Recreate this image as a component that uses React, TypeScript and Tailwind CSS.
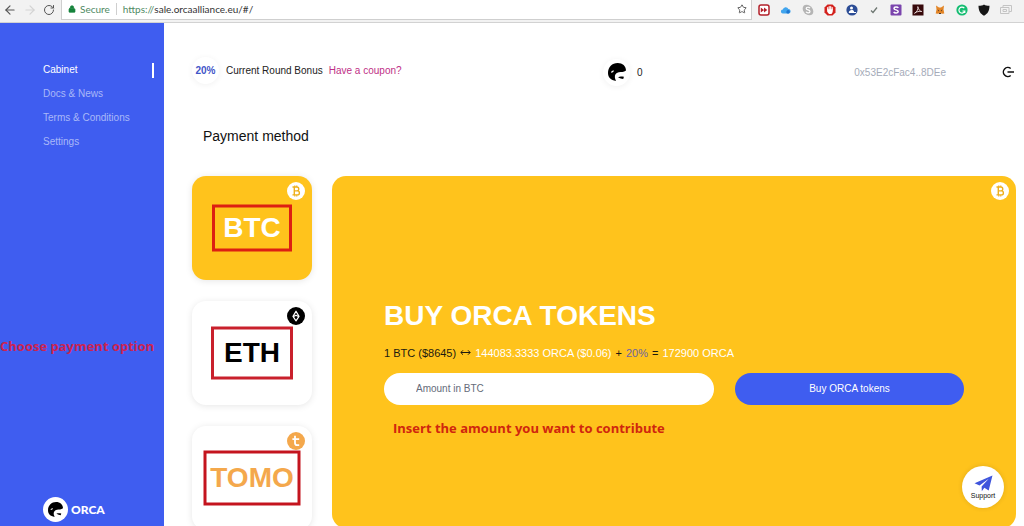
import type { ReactNode } from "react";
import { ArrowLeft, ArrowRight, RotateCw, Lock, Star } from "lucide-react";

const navItems = ["Cabinet", "Docs & News", "Terms & Conditions", "Settings"];

type Method = { name: string; card: string; badge: string; mark: string; icon: ReactNode };

const methods: Method[] = [
  { name: "BTC", card: "bg-[#ffc31c] text-white", badge: "bg-white text-[#eeb01c]", mark: "h-[47px] w-[80px] border-[#dd1f12]", icon: <BitcoinIcon /> },
  { name: "ETH", card: "bg-white text-black", badge: "bg-black text-white", mark: "h-[53px] w-[82px] border-[#c9202c]", icon: <EthIcon /> },
  { name: "TOMO", card: "bg-white text-[#f4a84c]", badge: "bg-[#f4a84c] text-white", mark: "h-[55px] w-[97px] border-[#c4141e]", icon: <TomoIcon /> },
];

function BitcoinIcon() {
  return (
    <svg viewBox="0 0 18 18" className="size-[18px]" fill="none" stroke="currentColor" strokeWidth="1.4">
      <path d="M5.5 5h4.3a1.9 1.9 0 0 1 0 3.9H7.2M7.2 8.9h3.2a2 2 0 0 1 0 4H5.5M7.3 5v7.9" />
      <path d="M7.8 3.4V5M9.8 3.4V5M7.8 13v1.6M9.8 13v1.6" strokeWidth="1" />
    </svg>
  );
}

function EthIcon() {
  return (
    <svg viewBox="0 0 18 18" className="size-[18px]" fill="none" stroke="currentColor" strokeWidth="1.2" strokeLinejoin="round">
      <path d="M9 4.2 12 9.4 9 13.8 6 9.4Z" />
      <path d="M6.2 9.6 9 8.2l2.8 1.4" />
    </svg>
  );
}

function TomoIcon() {
  return (
    <svg viewBox="0 0 18 18" className="size-[18px]" fill="none" stroke="currentColor" strokeWidth="1.8">
      <path d="M8 3.8v7.1a2.2 2.2 0 0 0 2.2 2.2h2M5.4 7.2h6.8" />
    </svg>
  );
}

function OrcaIcon({ className }: { className: string }) {
  return (
    <svg viewBox="0 0 52 52" className={className} aria-hidden="true">
      <path d="M0 29C0 12 12 0 28 0c14 0 24 9 24 22-7 5-13 4-21 5-9 2-12 8-11 16l3 9C8 50 0 41 0 29Z" fill="#000" />
      <path d="M9 28c0-4 4-7 8-6 0 3-3 6-8 6Z" fill="#fff" />
      <path d="M29 41c6-3 11-2 17-1l-2 6c-5 0-9-2-15-5Z" fill="#000" />
    </svg>
  );
}

function Extensions() {
  const icon = "size-3 shrink-0";
  return (
    <div className="flex items-center gap-[10px]">
      <svg viewBox="0 0 12 12" className={icon}>
        <rect x="1" y="1" width="10" height="10" rx="2" fill="#fff" stroke="#b3202a" strokeWidth="1.5" />
        <path d="M2.8 3.4 6 6 2.8 8.6ZM6 3.4 9.3 6 6 8.6Z" fill="#b3202a" />
      </svg>
      <svg viewBox="0 0 12 12" className={icon}>
        <path d="M3 9.5a2 2 0 0 1-.2-4A3 3 0 0 1 8.4 5a2.3 2.3 0 0 1 .6 4.5Z" fill="#41a5ee" />
        <path d="M7 9.5a2 2 0 0 1 1.500-3.500 2 2 0 0 1 .5 3.500Z" fill="#2077d1" />
      </svg>
      <svg viewBox="0 0 12 12" className={icon}>
        <circle cx="4.5" cy="4.5" r="3.8" fill="#b5b5b5" />
        <circle cx="7.5" cy="7.5" r="3.8" fill="#b5b5b5" />
        <circle cx="6" cy="6" r="4.6" fill="#b5b5b5" />
        <path d="M8 4.2C7 2.8 4.2 3 4.2 4.6 4.2 6.4 8 5.4 8 7.4 8 9.2 4.8 9.2 4 7.7" fill="none" stroke="#fff" strokeWidth="1.2" />
      </svg>
      <svg viewBox="0 0 12 12" className={icon}>
        <path d="M3.5.5h5l3 3v5l-3 3h-5l-3-3v-5Z" fill="#d3211d" />
        <path d="M3.7 6V3.5M5.2 5.5v-3M6.7 5.5v-3M8.2 6V3.5" stroke="#fff" strokeWidth="1.1" strokeLinecap="round" />
        <path d="M3.2 5.3h5.5V8L7.5 10H5L3.2 7.8Z" fill="#fff" />
      </svg>
      <svg viewBox="0 0 12 12" className={icon}>
        <circle cx="6" cy="6" r="5.6" fill="#2c4d96" />
        <circle cx="5.5" cy="4" r="1.5" fill="#fff" />
        <path d="M2.8 8.8c0-3.5 5.3-3.5 5.3-.8L10 8v1H2.8Z" fill="#fff" />
      </svg>
      <svg viewBox="0 0 12 12" className={icon}>
        <path d="m3 6.5 2 2 4-5" fill="none" stroke="#6d7671" strokeWidth="1.3" />
      </svg>
      <svg viewBox="0 0 12 12" className={icon}>
        <rect x=".5" y=".5" width="11" height="11" rx="1" fill="#7b45ad" />
        <path d="M8.3 4C7.5 2.6 4 2.7 4 4.4 4 6.3 8.2 5.5 8.2 7.5 8.2 9.4 4.6 9.5 3.7 7.8" fill="none" stroke="#fff" strokeWidth="1.5" />
      </svg>
      <svg viewBox="0 0 12 12" className={icon}>
        <rect x=".5" y=".5" width="11" height="11" fill="#37090b" />
        <path d="M2.5 9.3C5 8 6.4 5 5.8 2.6c1 3.5 2 4.6 4 4.9C7.3 7 4.5 7.6 2.5 9.3Z" fill="none" stroke="#e9d8d8" strokeWidth=".9" />
      </svg>
      <svg viewBox="0 0 12 12" className={icon}>
        <path d="m2 1.5 3 2h2l3-2-.5 4 .8 4-2.3.2L6 9l-2 .7-2.3-.2.8-4Z" fill="#e38526" />
        <path d="m3.5 5.5 1.6.8-.2 1.2ZM8.5 5.500l-1.600.8.2 1.200ZM5 9h2v1H5Z" fill="#4b3524" />
      </svg>
      <svg viewBox="0 0 12 12" className={icon}>
        <circle cx="6" cy="6" r="5.6" fill="#15bd72" />
        <path d="M8.3 4.2A3 3 0 1 0 8.8 7H6.5M8.8 6.5V9" fill="none" stroke="#fff" strokeWidth="1.2" />
      </svg>
      <svg viewBox="0 0 12 12" className={icon}>
        <path d="M.5 1.8C3 1.8 4.6 1.4 6 .4c1.4 1 3 1.4 5.5 1.4C11.5 7 9.5 10 6 11.7 2.5 10 .5 7 .5 1.8Z" fill="#161616" />
      </svg>
      <svg viewBox="0 0 12 12" className={icon} fill="none" stroke="#c4c4c4">
        <path d="M3 3.5v-2h8.5v6H9M.5 3.5H9v6H.5ZM3 5.5h3.5v2H3Z" />
      </svg>
    </div>
  );
}

function BrowserBar() {
  return (
    <div className="flex h-[23px] shrink-0 items-center border-b border-[#d2d2d2] bg-[#f2f2f2] pr-3 pb-[3px] font-['Lato',sans-serif] text-[10px] text-[#555]">
      <div className="flex w-[61px] shrink-0 items-center gap-[6px] pl-[3px]">
        <button aria-label="Back"><ArrowLeft className="size-[14px]" /></button>
        <button aria-label="Forward" className="text-[#d3d3d3]"><ArrowRight className="size-[14px]" /></button>
        <button aria-label="Reload"><RotateCw className="size-3" /></button>
      </div>
      <div className="mr-[6px] flex h-5 flex-1 items-center border border-t-0 border-[#cfcfcf] bg-white pr-1 pl-[6px]">
        <Lock className="mr-1 size-2 fill-[#16833c] text-[#16833c]" />
        <span className="text-[#4f8a63]">Secure</span>
        <span className="mx-[6px] h-3 w-px bg-[#cfcfcf]" />
        <label htmlFor="url" className="text-[#4f8a63]">https://</label>
        <input id="url" defaultValue="sale.orcaalliance.eu/#/" className="min-w-0 flex-1 text-[#333] outline-none" />
        <button aria-label="Bookmark"><Star className="size-[10px] text-[#444]" /></button>
      </div>
      <Extensions />
    </div>
  );
}

function Sidebar() {
  return (
    <aside className="relative flex w-[164px] shrink-0 flex-col justify-between bg-[#3f5df0] pt-[35px] pb-1">
      <nav className="text-[10px] leading-6">
        {navItems.map((item, i) => (
          <a
            key={item}
            href="#/"
            className={i === 0 ? "flex items-center justify-between pr-[10px] pl-[43px] text-white" : "flex pl-[43px] text-[#a9b8f8]"}
          >
            {item}
            {i === 0 && <span className="h-[15px] w-[2px] bg-white" />}
          </a>
        ))}
      </nav>
      <p className="absolute top-[313px] left-0 font-['Open_Sans',sans-serif] text-[13px] leading-5 font-bold whitespace-nowrap text-[#cc2350]">
        Choose payment option
      </p>
      <div className="flex items-center gap-[3px] pl-[43px]">
        <span className="flex size-[25px] items-center justify-center rounded-full bg-white">
          <OrcaIcon className="size-[15px]" />
        </span>
        <span className="font-['Lato',sans-serif] text-[12px] font-black text-white">ORCA</span>
      </div>
    </aside>
  );
}

function TopBar() {
  return (
    <header className="flex h-[26px] items-center text-[10px] text-[#222]">
      <div className="flex flex-1 items-center">
        <span className="mr-[7px] flex size-[27px] items-center justify-center rounded-full font-bold text-[#3f55c8] shadow-[0_1px_6px_rgba(0,0,0,0.06)]">20%</span>
        <span>Current Round Bonus</span>
        <a href="#/coupon" className="ml-[6px] text-[#c02f86]">Have a coupon?</a>
      </div>
      <div className="flex flex-1 items-center justify-between pt-1 pr-[2px]">
        <div className="flex items-center gap-[7px]">
          <span className="flex size-[27px] items-center justify-center rounded-full shadow-[0_1px_6px_rgba(0,0,0,0.06)]">
            <OrcaIcon className="size-[18px]" />
          </span>
          <span>0</span>
        </div>
        <div className="flex items-center gap-14">
          <span className="text-[#a5abb9]">0x53E2cFac4..8DEe</span>
          <button aria-label="Log out">
            <svg viewBox="0 0 12 12" className="size-3" fill="none" stroke="#111" strokeWidth="1.5">
              <path d="M8.7 2.5A4.5 4.5 0 1 0 8.7 9.5M5.5 6H12" />
            </svg>
          </button>
        </div>
      </div>
    </header>
  );
}

function MethodCard({ method }: { method: Method }) {
  return (
    <button className={`relative flex h-[104px] items-center justify-center rounded-[14px] text-[28px] font-bold shadow-[0_1px_7px_rgba(0,0,0,0.1)] ${method.card}`}>
      {method.name}
      <span className={`absolute top-[6px] right-[7px] rounded-full ${method.badge}`}>{method.icon}</span>
      <span className={`absolute top-1/2 left-1/2 -translate-x-1/2 -translate-y-1/2 border-3 ${method.mark}`} />
    </button>
  );
}

function BuyPanel() {
  return (
    <section className="relative mb-[2px] flex flex-col justify-center rounded-[14px] bg-[#ffc31c] px-[52px]">
      <span className="absolute top-[6px] right-[7px] rounded-full bg-white text-[#eeb01c]"><BitcoinIcon /></span>
      <h2 className="text-[28px] leading-8 font-bold text-white">BUY ORCA TOKENS</h2>
      <p className="mt-[13px] flex items-center gap-1 text-[11px] leading-4 text-[#1d1a10]">
        <span>1 BTC ($8645)</span>
        <svg viewBox="0 0 11 7" className="h-[7px] w-[11px]" fill="none" stroke="currentColor">
          <path d="M1 3.5h9M3 1.3.8 3.500 3 5.700M8 1.300l2.200 2.200L8 5.700" />
        </svg>
        <span className="text-white">144083.3333 ORCA ($0.06)</span>
        <span>+</span>
        <span className="text-[#6d63a0]">20%</span>
        <span>=</span>
        <span className="text-white">172900 ORCA</span>
      </p>
      <form className="mt-3 grid grid-cols-[330fr_229fr] gap-[21px] text-[10px]" onSubmit={(e) => e.preventDefault()}>
        <input aria-label="Amount in BTC" placeholder="Amount in BTC" className="h-8 min-w-0 rounded-full bg-white px-8 outline-none placeholder:text-[#666b7a]" />
        <button className="h-8 rounded-full bg-[#3f5df0] text-white">Buy ORCA tokens</button>
      </form>
      <p className="absolute top-[242px] left-[61px] font-['Open_Sans',sans-serif] text-[13px] leading-5 font-bold text-[#d0260e]">
        Insert the amount you want to contribute
      </p>
    </section>
  );
}

export default function App() {
  return (
    <div className="relative flex h-screen flex-col overflow-hidden bg-white font-['Liberation_Sans',Arial,sans-serif]">
      <BrowserBar />
      <div className="flex min-h-0 flex-1">
        <Sidebar />
        <main className="min-w-0 flex-1 pt-[34px] pr-2 pl-7">
          <TopBar />
          <h1 className="mt-[43px] pl-[11px] text-[14px] leading-5 text-[#111]">Payment method</h1>
          <div className="mt-[30px] grid grid-cols-[120px_1fr] gap-5">
            <div className="flex flex-col gap-[21px]">
              {methods.map((m) => (
                <MethodCard key={m.name} method={m} />
              ))}
            </div>
            <BuyPanel />
          </div>
        </main>
      </div>
      <button className="absolute right-5 bottom-[18px] flex size-[42px] flex-col items-center justify-center rounded-full bg-white text-[7px] leading-2 text-[#111] shadow-[0_0_5px_rgba(0,0,0,0.12)]">
        <svg viewBox="0 0 20 18" className="h-[17px] w-[19px]" fill="#3f55dc">
          <path d="M19.5.5.5 8.8l5.3 2.3L15.5 4 8 12.2l.2 5 2.7-3.6 4.6 2.8Z" />
        </svg>
        Support
      </button>
    </div>
  );
}
